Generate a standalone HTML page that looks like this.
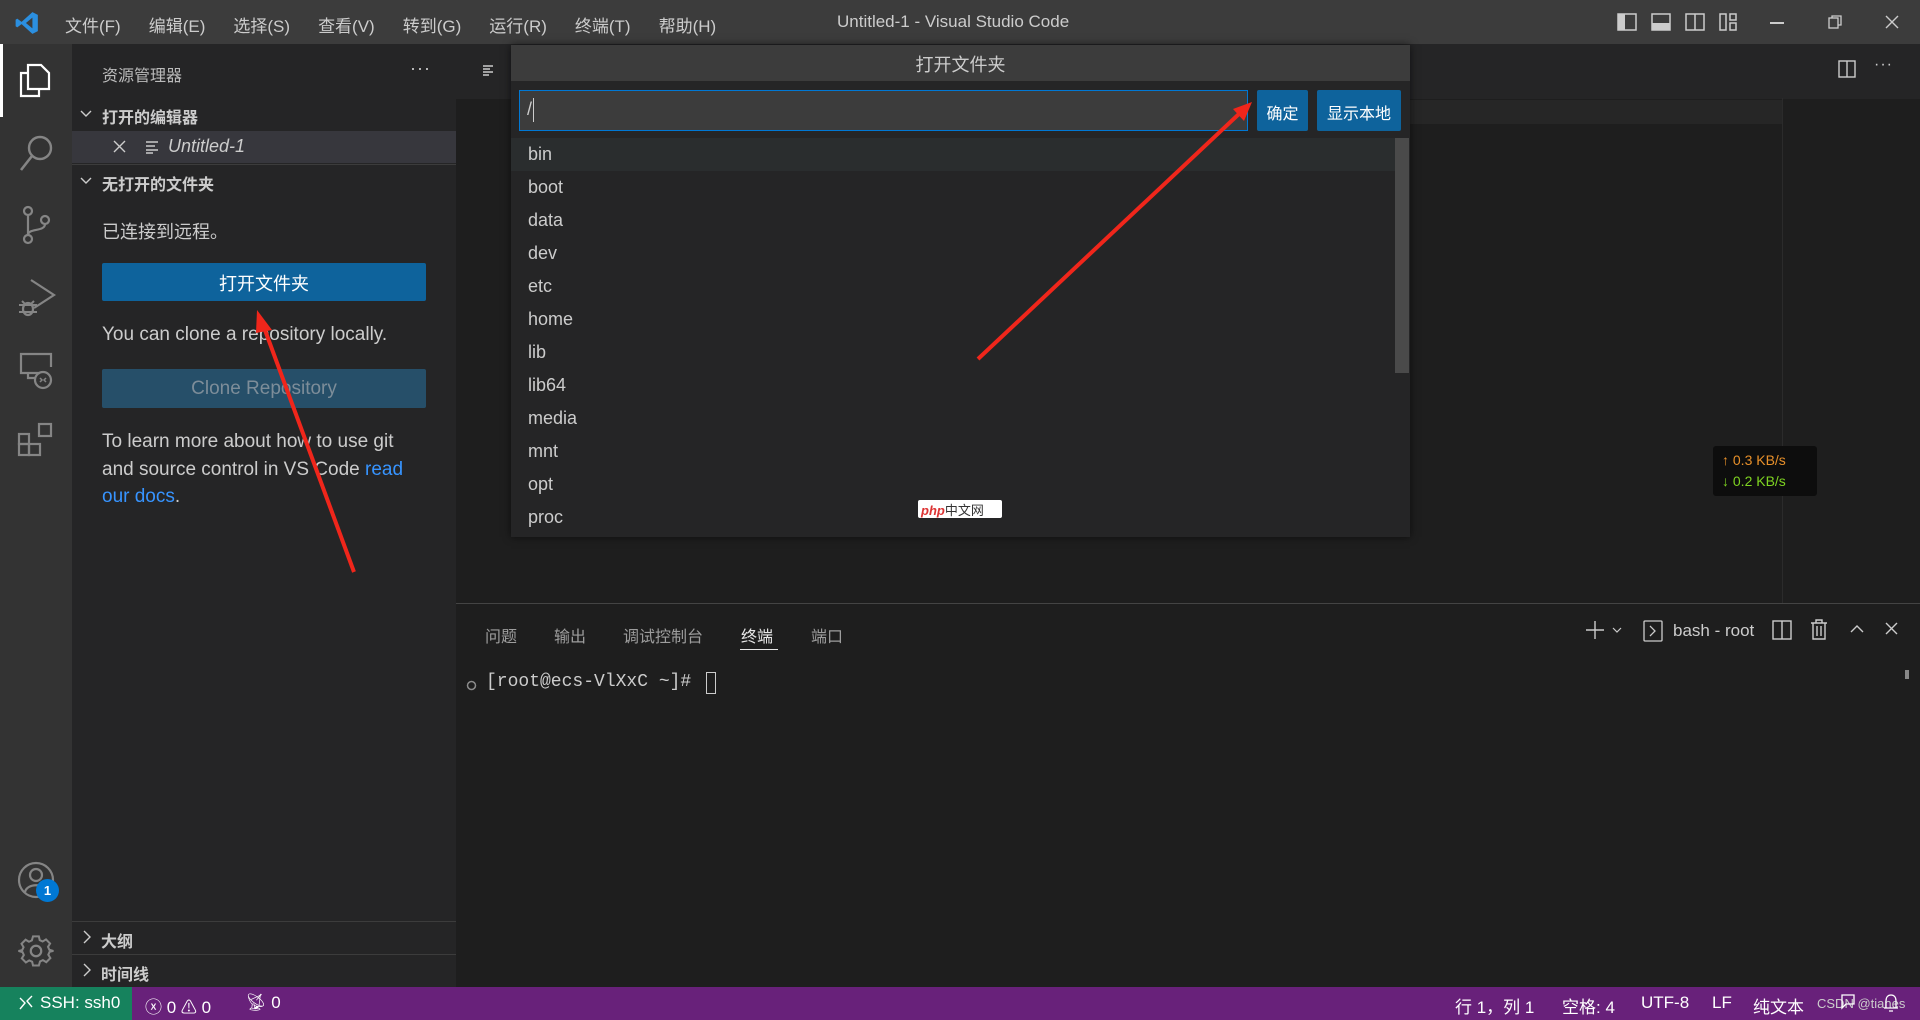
<!DOCTYPE html>
<html><head><meta charset="utf-8"><style>
*{margin:0;padding:0;box-sizing:border-box}
body{width:1920px;height:1020px;overflow:hidden;background:#1e1e1e;font-family:"Liberation Sans","Noto Sans CJK SC",sans-serif;color:#ccc;position:relative}
.a{position:absolute}
.t{position:absolute;white-space:nowrap}
svg{position:absolute;overflow:visible}
</style></head><body>
<!-- title bar -->
<div class="a" style="left:0;top:0;width:1920px;height:44px;background:#3c3c3c"></div>
<svg style="left:14px;top:10px" width="26" height="26" viewBox="0 0 24 24"><path d="M17 2 L22 4.5 V19.5 L17 22 L7 13 L3 16 L1.5 15 V9 L3 8 L7 11 L17 2 Z M17 7 L11 12 L17 17 Z" fill="#2b8fe0"/></svg>
<div class="t" style="left:65px;top:12px;font-size:17px;color:#ccc">
<span style="margin-right:28px">文件(F)</span><span style="margin-right:28px">编辑(E)</span><span style="margin-right:28px">选择(S)</span><span style="margin-right:28px">查看(V)</span><span style="margin-right:28px">转到(G)</span><span style="margin-right:28px">运行(R)</span><span style="margin-right:28px">终端(T)</span><span>帮助(H)</span></div>
<div class="t" style="left:837px;top:12px;font-size:17px;color:#ccc">Untitled-1 - Visual Studio Code</div>
<svg style="left:1617px;top:13px" width="20" height="18"><rect x="1" y="1" width="18" height="16" fill="none" stroke="#ccc" stroke-width="1.5"/><rect x="1" y="1" width="7" height="16" fill="#ccc"/></svg>
<svg style="left:1651px;top:13px" width="20" height="18"><rect x="1" y="1" width="18" height="16" fill="none" stroke="#ccc" stroke-width="1.5"/><rect x="1" y="10" width="18" height="7" fill="#ccc"/></svg>
<svg style="left:1685px;top:13px" width="20" height="18"><rect x="1" y="1" width="18" height="16" fill="none" stroke="#ccc" stroke-width="1.5"/><line x1="10" y1="1" x2="10" y2="17" stroke="#ccc" stroke-width="1.5"/></svg>
<svg style="left:1719px;top:13px" width="20" height="18"><rect x="1" y="1" width="6" height="16" fill="none" stroke="#ccc" stroke-width="1.5"/><rect x="11" y="1" width="6" height="6" fill="none" stroke="#ccc" stroke-width="1.5"/><rect x="11" y="10" width="6" height="7" fill="none" stroke="#ccc" stroke-width="1.5"/></svg>
<div class="a" style="left:1770px;top:22px;width:14px;height:1.5px;background:#ccc"></div>
<svg style="left:1828px;top:15px" width="14" height="14"><rect x="1" y="3" width="9" height="10" fill="none" stroke="#ccc" stroke-width="1.3"/><path d="M4 3V1H13V10H10" fill="none" stroke="#ccc" stroke-width="1.3"/></svg>
<svg style="left:1885px;top:15px" width="14" height="14"><path d="M1 1L13 13M13 1L1 13" stroke="#ccc" stroke-width="1.4"/></svg>

<!-- activity bar -->
<div class="a" style="left:0;top:44px;width:72px;height:943px;background:#333"></div>
<div class="a" style="left:0;top:44px;width:3px;height:73px;background:#fff"></div>
<svg style="left:18px;top:62px" width="34" height="36" viewBox="0 0 34 36"><path d="M10 3H23L31 11V27H10Z" fill="none" stroke="#fff" stroke-width="2.2"/><path d="M10 11H3V34H21V27" fill="none" stroke="#fff" stroke-width="2.2"/></svg>
<svg style="left:18px;top:133px" width="36" height="40"><circle cx="22" cy="15" r="11" fill="none" stroke="#858585" stroke-width="2.4"/><line x1="14" y1="23" x2="3" y2="37" stroke="#858585" stroke-width="2.6"/></svg>
<svg style="left:20px;top:206px" width="32" height="40"><circle cx="8" cy="5" r="4" fill="none" stroke="#858585" stroke-width="2.2"/><circle cx="8" cy="33" r="4" fill="none" stroke="#858585" stroke-width="2.2"/><circle cx="25" cy="14" r="4" fill="none" stroke="#858585" stroke-width="2.2"/><path d="M8 9V29M25 18C25 26 8 22 8 29" fill="none" stroke="#858585" stroke-width="2.2"/></svg>
<svg style="left:17px;top:278px" width="38" height="40"><path d="M14 2L37 17L17 30" fill="none" stroke="#858585" stroke-width="2.2"/><ellipse cx="11" cy="31" rx="5" ry="6" fill="none" stroke="#858585" stroke-width="2.2"/><path d="M2 27H20M2 34H20M5 23L8 26M17 23L14 26" stroke="#858585" stroke-width="2"/></svg>
<svg style="left:18px;top:353px" width="38" height="38"><path d="M22 20H3V1H33V14M10 20V25H17" fill="none" stroke="#858585" stroke-width="2.2"/><circle cx="25" cy="27" r="8" fill="none" stroke="#858585" stroke-width="2.2"/><path d="M22 25l2 2-2 2M28 25l-2 2 2 2" fill="none" stroke="#858585" stroke-width="1.5"/></svg>
<svg style="left:18px;top:423px" width="36" height="36"><rect x="1" y="11" width="10" height="10" fill="none" stroke="#858585" stroke-width="2.2"/><rect x="1" y="21" width="10" height="11" fill="none" stroke="#858585" stroke-width="2.2"/><rect x="11" y="21" width="11" height="11" fill="none" stroke="#858585" stroke-width="2.2"/><rect x="21" y="1" width="12" height="12" fill="none" stroke="#858585" stroke-width="2.2"/></svg>
<svg style="left:17px;top:861px" width="40" height="40"><circle cx="19" cy="19" r="17" fill="none" stroke="#858585" stroke-width="2.2"/><circle cx="19" cy="14" r="6" fill="none" stroke="#858585" stroke-width="2.2"/><path d="M8 31C10 22 28 22 30 31" fill="none" stroke="#858585" stroke-width="2.2"/></svg>
<div class="a" style="left:36px;top:879px;width:23px;height:23px;border-radius:50%;background:#0078d4;color:#fff;font-size:13px;text-align:center;line-height:23px;font-weight:bold">1</div>
<svg style="left:17px;top:932px" width="38" height="38" viewBox="0 0 24 24"><path d="M10 2h4l.6 2.6 2 .9 2.3-1.4 2.8 2.8-1.4 2.3.9 2L24 12v0l-2.6.6-.9 2 1.4 2.3-2.8 2.8-2.3-1.4-2 .9L14 22h-4l-.6-2.6-2-.9-2.3 1.4-2.8-2.8 1.4-2.3-.9-2L0 12l2.6-.6.9-2L2.1 7.1l2.8-2.8 2.3 1.4 2-.9Z" fill="none" stroke="#858585" stroke-width="1.4" transform="scale(.92) translate(1 1)"/><circle cx="12" cy="12" r="3.3" fill="none" stroke="#858585" stroke-width="1.4"/></svg>

<!-- sidebar -->
<div class="a" style="left:72px;top:44px;width:384px;height:943px;background:#252526"></div>
<div class="t" style="left:102px;top:62px;font-size:16px;color:#bbb">资源管理器</div>
<div class="t" style="left:410px;top:58px;font-size:18px;color:#ccc;letter-spacing:1px">···</div>
<svg style="left:80px;top:109px" width="12" height="10"><path d="M1 2L6 7L11 2" fill="none" stroke="#ccc" stroke-width="1.4"/></svg>
<div class="t" style="left:102px;top:104px;font-size:16px;font-weight:bold;color:#ccc">打开的编辑器</div>
<div class="a" style="left:72px;top:131px;width:384px;height:32px;background:#37373d"></div>
<svg style="left:113px;top:140px" width="13" height="13"><path d="M1 1L12 12M12 1L1 12" stroke="#ccc" stroke-width="1.4"/></svg>
<svg style="left:145px;top:140px" width="14" height="14"><path d="M1 2H13M1 6H10M1 10H13M1 13H8" stroke="#ccc" stroke-width="1.6"/></svg>
<div class="t" style="left:168px;top:136px;font-size:18px;font-style:italic;color:#ccc">Untitled-1</div>
<div class="a" style="left:72px;top:164px;width:384px;height:1px;background:#3c3c3c"></div>
<svg style="left:80px;top:176px" width="12" height="10"><path d="M1 2L6 7L11 2" fill="none" stroke="#ccc" stroke-width="1.4"/></svg>
<div class="t" style="left:102px;top:171px;font-size:16px;font-weight:bold;color:#ccc">无打开的文件夹</div>
<div class="t" style="left:102px;top:218px;font-size:18px;color:#ccc">已连接到远程。</div>
<div class="a" style="left:102px;top:263px;width:324px;height:38px;background:#0e639c;border-radius:2px"></div>
<div class="t" style="left:102px;top:270px;width:324px;text-align:center;font-size:18px;color:#fff">打开文件夹</div>
<div class="t" style="left:102px;top:324px;font-size:19px;color:#ccc">You can clone a repository locally.</div>
<div class="a" style="left:102px;top:369px;width:324px;height:39px;background:#264f69;border-radius:2px"></div>
<div class="t" style="left:102px;top:378px;width:324px;text-align:center;font-size:19px;color:#7d8d99">Clone Repository</div>
<div class="a" style="left:102px;top:428px;width:340px;font-size:19px;line-height:27.5px;color:#ccc;white-space:nowrap">To learn more about how to use git<br>and source control in VS Code <span style="color:#3794ff">read</span><br><span style="color:#3794ff">our docs</span>.</div>
<div class="a" style="left:72px;top:921px;width:384px;height:1px;background:#3c3c3c"></div>
<svg style="left:82px;top:930px" width="10" height="14"><path d="M2 1L8 7L2 13" fill="none" stroke="#ccc" stroke-width="1.4"/></svg>
<div class="t" style="left:101px;top:928px;font-size:16px;font-weight:bold;color:#ccc">大纲</div>
<div class="a" style="left:72px;top:954px;width:384px;height:1px;background:#3c3c3c"></div>
<svg style="left:82px;top:963px" width="10" height="14"><path d="M2 1L8 7L2 13" fill="none" stroke="#ccc" stroke-width="1.4"/></svg>
<div class="t" style="left:101px;top:961px;font-size:16px;font-weight:bold;color:#ccc">时间线</div>

<!-- editor -->
<div class="a" style="left:456px;top:44px;width:1464px;height:55px;background:#252526"></div>
<svg style="left:482px;top:64px" width="12" height="13"><path d="M1 2H11M1 5H8M1 8H11M1 11H7" stroke="#ccc" stroke-width="1.5"/></svg>
<div class="a" style="left:1410px;top:100px;width:372px;height:24px;background:#262626"></div>
<svg style="left:1838px;top:60px" width="18" height="18"><rect x="1" y="1" width="16" height="16" fill="none" stroke="#ccc" stroke-width="1.4"/><line x1="9" y1="1" x2="9" y2="17" stroke="#ccc" stroke-width="1.4"/></svg>
<div class="t" style="left:1874px;top:56px;font-size:16px;color:#ccc;letter-spacing:1px">···</div>
<div class="a" style="left:1782px;top:98px;width:1px;height:505px;background:#2b2b2b"></div>

<!-- network widget -->
<div class="a" style="left:1713px;top:446px;width:104px;height:50px;background:#0d0d0d;border-radius:3px"></div>
<div class="t" style="left:1722px;top:452px;font-size:14px;color:#e8902a">↑ 0.3 KB/s</div>
<div class="t" style="left:1722px;top:473px;font-size:14px;color:#7ed321">↓ 0.2 KB/s</div>

<!-- panel -->
<div class="a" style="left:456px;top:603px;width:1464px;height:1px;background:#444"></div>
<div class="t" style="left:485px;top:623px;font-size:16px;color:#9d9d9d">问题</div>
<div class="t" style="left:554px;top:623px;font-size:16px;color:#9d9d9d">输出</div>
<div class="t" style="left:623px;top:623px;font-size:16px;color:#9d9d9d">调试控制台</div>
<div class="t" style="left:741px;top:623px;font-size:16px;color:#e7e7e7">终端</div>
<div class="a" style="left:740px;top:649px;width:38px;height:1px;background:#e7e7e7"></div>
<div class="t" style="left:811px;top:623px;font-size:16px;color:#9d9d9d">端口</div>
<svg style="left:1585px;top:620px" width="20" height="20"><path d="M10 1V19M1 10H19" stroke="#ccc" stroke-width="1.4"/></svg>
<svg style="left:1612px;top:627px" width="10" height="7"><path d="M1 1L5 5L9 1" fill="none" stroke="#ccc" stroke-width="1.2"/></svg>
<svg style="left:1643px;top:620px" width="20" height="22"><rect x="1" y="1" width="18" height="20" rx="1" fill="none" stroke="#ccc" stroke-width="1.3"/><path d="M7 6L12 11L7 16" fill="none" stroke="#ccc" stroke-width="1.3"/></svg>
<div class="t" style="left:1673px;top:621px;font-size:17px;color:#ccc">bash - root</div>
<svg style="left:1772px;top:620px" width="20" height="20"><rect x="1" y="1" width="18" height="18" fill="none" stroke="#ccc" stroke-width="1.4"/><line x1="10" y1="1" x2="10" y2="19" stroke="#ccc" stroke-width="1.4"/></svg>
<svg style="left:1810px;top:619px" width="18" height="22"><path d="M1 4H17M6 4V1H12V4M3 4V20H15V4M7 7V17M11 7V17" fill="none" stroke="#ccc" stroke-width="1.4"/></svg>
<svg style="left:1850px;top:624px" width="14" height="9"><path d="M1 8L7 2L13 8" fill="none" stroke="#ccc" stroke-width="1.4"/></svg>
<svg style="left:1885px;top:622px" width="13" height="13"><path d="M1 1L12 12M12 1L1 12" stroke="#ccc" stroke-width="1.4"/></svg>
<svg style="left:466px;top:680px" width="11" height="11"><circle cx="5.5" cy="5.5" r="4" fill="none" stroke="#8b8b8b" stroke-width="1.5"/></svg>
<div class="t" style="left:486px;top:672px;font-family:'Liberation Mono',monospace;font-size:18px;color:#ccc">[root@ecs-VlXxC ~]# </div>
<div class="a" style="left:706px;top:672px;width:10px;height:22px;border:1.5px solid #ccc"></div>
<div class="a" style="left:1905px;top:670px;width:4px;height:9px;background:#888"></div>

<!-- quick pick -->
<div class="a" style="left:511px;top:45px;width:899px;height:492px;background:#252526;box-shadow:0 0 8px rgba(0,0,0,.6)"></div>
<div class="a" style="left:511px;top:45px;width:899px;height:36px;background:#3c3c3c"></div>
<div class="t" style="left:511px;top:51px;width:899px;text-align:center;font-size:18px;color:#ccc">打开文件夹</div>
<div class="a" style="left:519px;top:90px;width:729px;height:41px;background:#3c3c3c;border:1px solid #0078d4"></div>
<div class="t" style="left:527px;top:99px;font-size:18px;color:#ccc">/</div>
<div class="a" style="left:533px;top:98px;width:1px;height:24px;background:#ccc"></div>
<div class="a" style="left:1257px;top:90px;width:51px;height:41px;background:#0e639c;border-radius:2px"></div>
<div class="t" style="left:1257px;top:100px;width:51px;text-align:center;font-size:16px;color:#fff">确定</div>
<div class="a" style="left:1317px;top:90px;width:84px;height:41px;background:#0e639c;border-radius:2px"></div>
<div class="t" style="left:1317px;top:100px;width:84px;text-align:center;font-size:16px;color:#fff">显示本地</div>
<div class="a" style="left:511px;top:138px;width:884px;height:33px;background:#2a2d2e"></div>
<div class="a" style="left:528px;top:138px;font-size:18px;line-height:33px;color:#ccc">bin<br>boot<br>data<br>dev<br>etc<br>home<br>lib<br>lib64<br>media<br>mnt<br>opt<br>proc</div>
<div class="a" style="left:1395px;top:138px;width:14px;height:235px;background:#4a4a4a"></div>

<!-- php logo -->
<div class="a" style="left:918px;top:500px;width:84px;height:18px;background:#fff;border-radius:2px"></div>
<div class="t" style="left:921px;top:500px;font-size:13px;color:#d33;font-style:italic;font-weight:bold">php<span style="color:#333;font-style:normal;font-weight:normal">中文网</span></div>

<!-- arrows -->
<svg style="left:0;top:0" width="1920" height="1020"><line x1="354" y1="572" x2="262" y2="322" stroke="#f0261b" stroke-width="4"/><path d="M257 310L272 330L256 333Z" fill="#f0261b"/><line x1="978" y1="359" x2="1240" y2="113" stroke="#f0261b" stroke-width="4"/><path d="M1252 102L1244 121L1233 109Z" fill="#f0261b"/></svg>

<!-- status bar -->
<div class="a" style="left:0;top:987px;width:1920px;height:33px;background:#68217a"></div>
<div class="a" style="left:0;top:987px;width:132px;height:33px;background:#16825d"></div>
<svg style="left:18px;top:994px" width="16" height="18"><path d="M2 4L7 9L2 15M14 2L9 7L14 13" fill="none" stroke="#fff" stroke-width="1.4"/></svg>
<div class="t" style="left:40px;top:993px;font-size:17px;color:#fff">SSH: ssh0</div>
<div class="t" style="left:145px;top:993px;font-size:17px;color:#fff">ⓧ 0 <span style="font-size:16px">⚠</span> 0</div>
<div class="t" style="left:245px;top:993px;font-size:17px;color:#fff">📡︎ 0</div>
<div class="t" style="left:1455px;top:993px;font-size:17px;color:#fff">行 1，列 1</div>
<div class="t" style="left:1562px;top:993px;font-size:17px;color:#fff">空格: 4</div>
<div class="t" style="left:1641px;top:993px;font-size:17px;color:#fff">UTF-8</div>
<div class="t" style="left:1712px;top:993px;font-size:17px;color:#fff">LF</div>
<div class="t" style="left:1753px;top:993px;font-size:17px;color:#fff">纯文本</div>
<div class="t" style="left:1817px;top:996px;font-size:13px;color:#ccc">CSDN @tianes</div>
<svg style="left:1840px;top:994px" width="16" height="20"><path d="M2 1H14V10H6L2 14Z" fill="none" stroke="#fff" stroke-width="1.3"/></svg>
<svg style="left:1883px;top:993px" width="16" height="22"><path d="M3 15V8C3 4 5 2 8 2S13 4 13 8V15ZM1 15H15M6 18H10" fill="none" stroke="#fff" stroke-width="1.3"/></svg>
</body></html>
